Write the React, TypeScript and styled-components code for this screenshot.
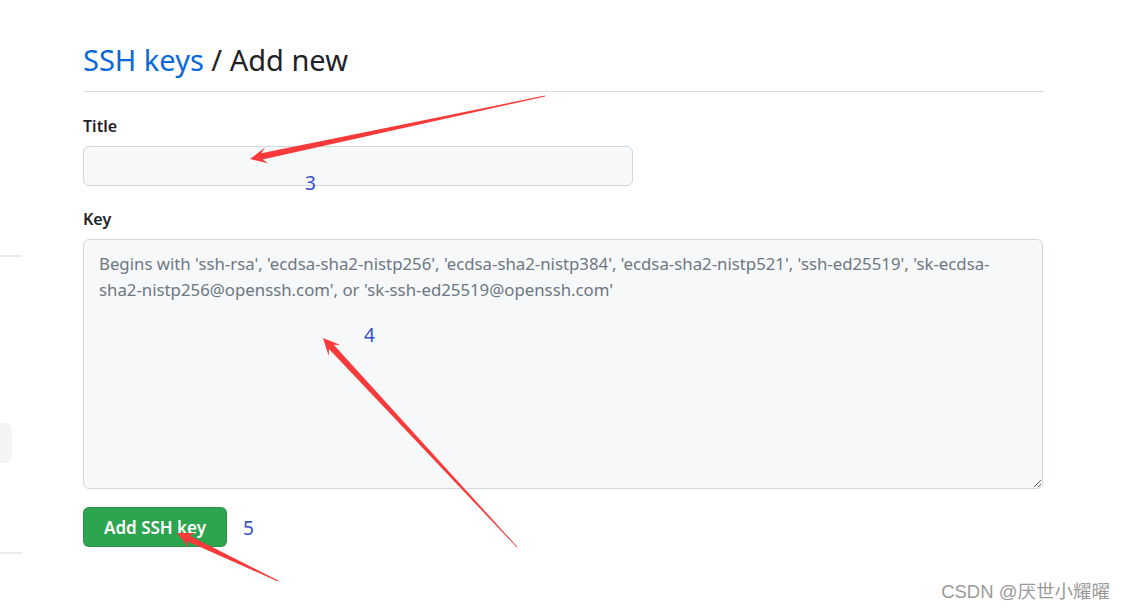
import React from "react";
import styled, { createGlobalStyle } from "styled-components";

const GlobalStyle = createGlobalStyle`
  html, body { margin: 0; padding: 0; background: #ffffff; }
  body {
    font-family: "Noto Sans", "Open Sans", "Liberation Sans", sans-serif;
    color: #1f2328;
    width: 1125px;
    height: 611px;
    overflow: hidden;
  }
  * { box-sizing: border-box; }
`;

const Page = styled.div`
  position: relative;
  width: 1125px;
  height: 611px;
  display: flex;
  align-items: flex-start;
`;

const Sidebar = styled.aside`
  width: 22px;
  flex: 0 0 22px;
  margin-right: 61px;
  padding-top: 255px;
  display: flex;
  flex-direction: column;
`;

const SideRule = styled.div<{ $gap: number }>`
  height: 2px;
  background: #e8ebef;
  margin-top: ${(p) => p.$gap}px;
`;

const SideItem = styled.div`
  width: 12px;
  height: 40px;
  margin-top: 166px;
  background: #f3f4f6;
  border-radius: 0 6px 6px 0;
`;

const Main = styled.main`
  width: 960px;
  display: flex;
  flex-direction: column;
`;

const Header = styled.div`
  padding: 40px 0 11px;
  border-bottom: 1px solid #d8dee4;
`;

const Heading = styled.h2`
  margin: 0;
  font-size: 29px;
  line-height: 40px;
  font-weight: 400;
  color: #1f2328;
`;

const Crumb = styled.a`
  color: #0969da;
  text-decoration: none;
`;

const Field = styled.div<{ $top: number }>`
  margin-top: ${(p) => p.$top}px;
  display: flex;
  flex-direction: column;
  align-items: flex-start;
`;

const Label = styled.label<{ $gap: number }>`
  font-size: 16px;
  line-height: 24px;
  font-weight: 600;
  color: #1f2328;
  margin-bottom: ${(p) => p.$gap}px;
`;

const TextInput = styled.input`
  width: 550px;
  height: 40px;
  padding: 0 15px;
  background: #f6f8fa;
  border: 1px solid #d0d7de;
  border-radius: 6px;
  font: inherit;
  font-size: 16px;
  outline: none;
`;

const KeyArea = styled.textarea`
  width: 960px;
  height: 250px;
  padding: 11px 15px;
  background: #f6f8fa;
  border: 1px solid #d0d7de;
  border-radius: 6px;
  font-family: "Noto Sans", "Open Sans", sans-serif;
  font-size: 16.8px;
  line-height: 26px;
  color: #1f2328;
  outline: none;
  resize: both;
  &::placeholder {
    color: #6e7781;
    opacity: 1;
  }
`;

const Actions = styled.div`
  margin-top: 18px;
  display: flex;
`;

const PrimaryButton = styled.button`
  height: 40px;
  padding: 0 20px;
  background: #2da44e;
  color: #ffffff;
  border: 1px solid rgba(31, 35, 40, 0.15);
  border-radius: 6px;
  font-family: "Noto Sans", "Open Sans", sans-serif;
  font-size: 17px;
  font-weight: 600;
  cursor: pointer;
`;

const Overlay = styled.div`
  position: absolute;
  inset: 0;
  pointer-events: none;
`;

const ArrowLayer = styled.svg`
  position: absolute;
  left: 0;
  top: 0;
`;

const StepNumber = styled.span<{ $x: number; $y: number }>`
  position: absolute;
  left: ${(p) => p.$x}px;
  top: ${(p) => p.$y}px;
  font-family: "Noto Sans", "Open Sans", sans-serif;
  font-size: 19px;
  line-height: 24px;
  color: #3352cc;
`;

const Watermark = styled.div`
  position: absolute;
  right: 15px;
  top: 579px;
  font-family: "Liberation Sans", "Noto Sans CJK SC", sans-serif;
  font-size: 18.5px;
  line-height: 26px;
  color: #9a9a9a;
  text-shadow: 0 0 1px #ffffff;
`;

type Pt = [number, number];

function arrowPoints(tail: Pt, tip: Pt): string {
  const dx = tip[0] - tail[0];
  const dy = tip[1] - tail[1];
  const len = Math.hypot(dx, dy);
  const ux = dx / len;
  const uy = dy / len;
  const nx = -uy;
  const ny = ux;
  const headLen = 17;
  const headHalf = 8;
  const shaftHalf = 3.2;
  const at = (d: number, w: number): string =>
    `${(tip[0] - ux * d + nx * w).toFixed(1)},${(tip[1] - uy * d + ny * w).toFixed(1)}`;
  const pts = [
    at(len, 0.4),
    at(headLen * 0.72, shaftHalf),
    at(headLen, headHalf),
    at(0, 0),
    at(headLen, -headHalf),
    at(headLen * 0.72, -shaftHalf),
    at(len, -0.4),
  ];
  return pts.join(" ");
}

const arrows: { tail: Pt; tip: Pt }[] = [
  { tail: [545, 96], tip: [250, 159] },
  { tail: [517, 547], tip: [323, 338] },
  { tail: [278, 581], tip: [177, 533] },
];

const steps = [
  { n: "3", x: 305, y: 171 },
  { n: "4", x: 364, y: 323 },
  { n: "5", x: 243, y: 516 },
];

const placeholder =
  "Begins with 'ssh-rsa', 'ecdsa-sha2-nistp256', 'ecdsa-sha2-nistp384', 'ecdsa-sha2-nistp521', 'ssh-ed25519', 'sk-ecdsa-sha2-nistp256@openssh.com', or 'sk-ssh-ed25519@openssh.com'";

export default function App() {
  return (
    <>
      <GlobalStyle />
      <Page>
        <Sidebar>
          <SideRule $gap={0} />
          <SideItem />
          <SideRule $gap={89} />
        </Sidebar>
        <Main>
          <Header>
            <Heading>
              <Crumb href="#">SSH keys</Crumb> / Add new
            </Heading>
          </Header>
          <Field $top={22}>
            <Label htmlFor="ssh-title" $gap={8}>
              Title
            </Label>
            <TextInput id="ssh-title" type="text" />
          </Field>
          <Field $top={21}>
            <Label htmlFor="ssh-key" $gap={8}>
              Key
            </Label>
            <KeyArea id="ssh-key" placeholder={placeholder} />
          </Field>
          <Actions>
            <PrimaryButton type="button">Add SSH key</PrimaryButton>
          </Actions>
        </Main>
        <Overlay>
          <ArrowLayer width={1125} height={611} viewBox="0 0 1125 611">
            {arrows.map((a, i) => (
              <polygon key={i} points={arrowPoints(a.tail, a.tip)} fill="#f83a3a" />
            ))}
          </ArrowLayer>
          {steps.map((s) => (
            <StepNumber key={s.n} $x={s.x} $y={s.y}>
              {s.n}
            </StepNumber>
          ))}
        </Overlay>
        <Watermark>CSDN @厌世小耀曜</Watermark>
      </Page>
    </>
  );
}
